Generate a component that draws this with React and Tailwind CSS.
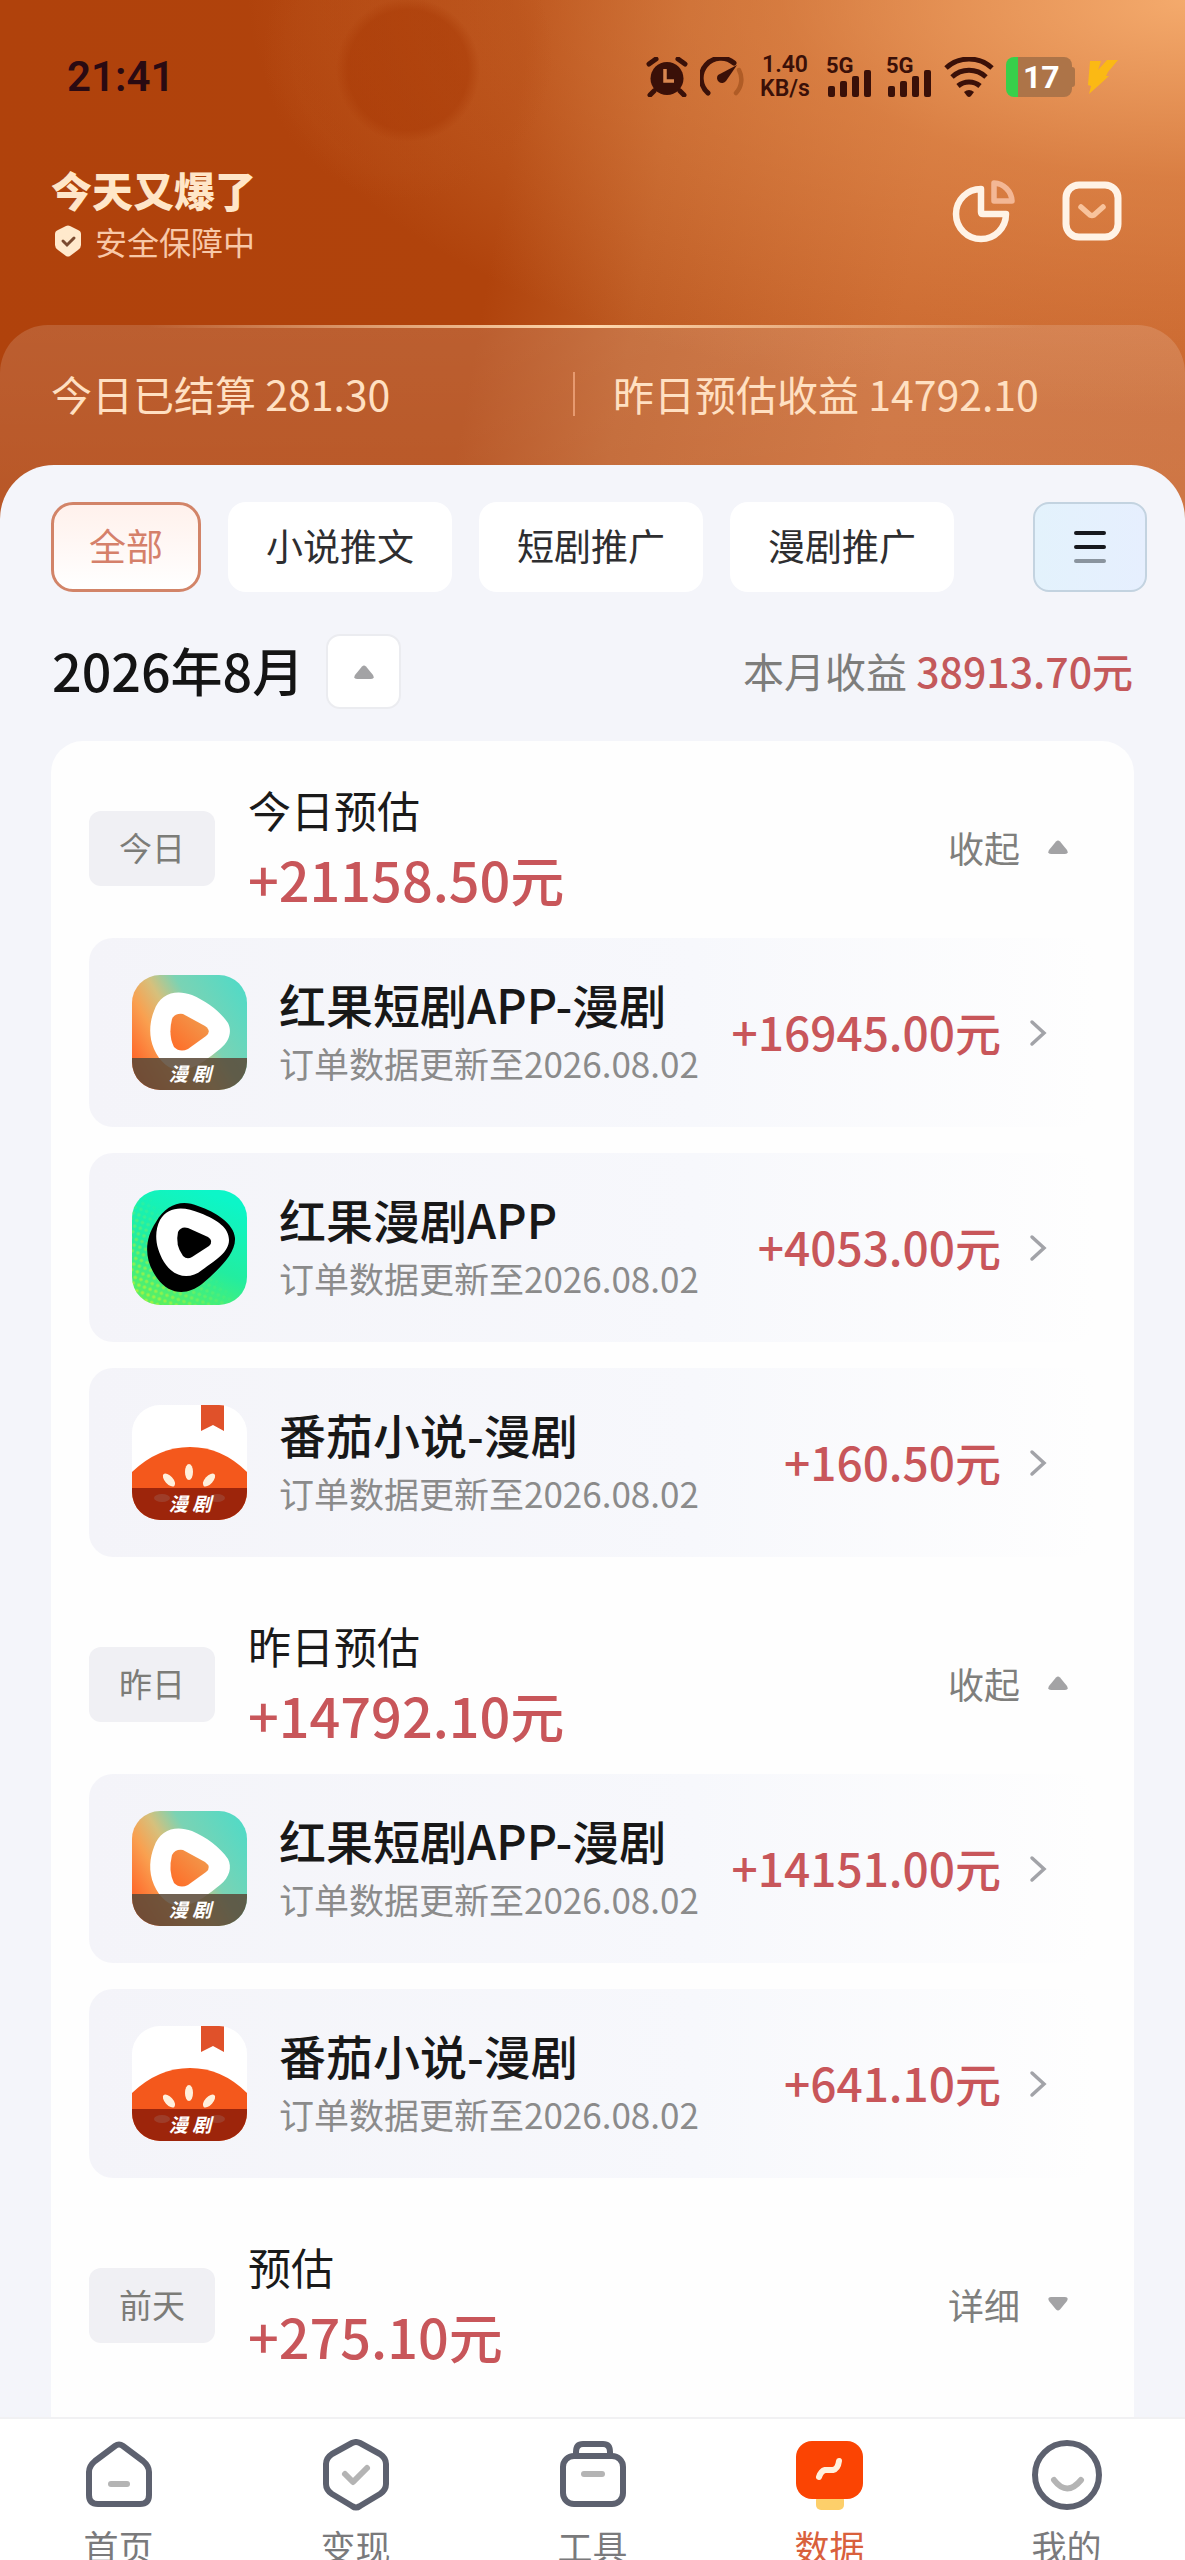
import React from 'react';

function AlarmIcon() {
  return (
    <svg viewBox="0 0 42 40" className="h-10 w-[42px]" fill="none" stroke="#3a1008" strokeLinecap="round">
      <circle cx="21" cy="21.500" r="16.500" fill="#3a1008" stroke="none" />
      <path d="M3 7l7-5M39 7l-7-5" strokeWidth="5" />
      <path d="M8 34l-4 4M34 34l4 4" strokeWidth="5" />
      <path d="M19 12v12h9" stroke="#d9864f" strokeWidth="3.500" strokeLinecap="butt" />
    </svg>
  );
}

function GaugeIcon() {
  return (
    <svg viewBox="0 0 44 40" className="h-10 w-11" fill="none" strokeLinecap="round">
      <path d="M39 13a20 20 0 0 1-3 23" stroke="#b05c26" strokeWidth="4.500" />
      <path d="M8 36A19 19 0 0 1 34 6" stroke="#3a1008" strokeWidth="5" />
      <path d="M37 8L18 18a5 5 0 1 0 8 6z" fill="#3a1008" />
    </svg>
  );
}

function SignalIcon() {
  return (
    <div className="flex h-10 w-[46px] flex-col">
      <span className="h-3 text-[22px] leading-[18px] font-bold">5G</span>
      <svg viewBox="0 0 46 28" className="h-7 w-[46px]" fill="#3a1008">
        <rect x="2" y="17" width="7" height="11" rx="2" />
        <rect x="14" y="12" width="7" height="16" rx="2" />
        <rect x="26" y="7" width="7" height="21" rx="2" />
        <rect x="38" y="1" width="7" height="27" rx="2" />
      </svg>
    </div>
  );
}

function WifiIcon() {
  return (
    <svg viewBox="0 0 50 40" className="h-10 w-[50px]" fill="none" stroke="#3a1008" strokeWidth="5">
      <path d="M2 11a34 34 0 0 1 46 0" />
      <path d="M8 20a25 25 0 0 1 34 0" />
      <path d="M14 29a17 17 0 0 1 22 0" />
      <path d="M20 35q5-4 10 0l-3 4q-2 2-4 0z" fill="#3a1008" stroke="none" />
    </svg>
  );
}

function StatusBar() {
  return (
    <div className="flex items-center justify-between pr-[66px] pl-[67px] font-['Roboto','Noto_Sans_CJK_SC',sans-serif] text-[#3a1008]">
      <time className="text-[42px] leading-12 font-semibold text-[#2a0a12]">21:41</time>
      <div className="flex items-center gap-3">
        <AlarmIcon />
        <GaugeIcon />
        <div className="ml-1 w-[50px] text-center text-[23px] leading-6 font-semibold whitespace-nowrap">
          <div>1.40</div>
          <div>KB/s</div>
        </div>
        <div className="ml-1 flex gap-[14px]">
          <SignalIcon />
          <SignalIcon />
        </div>
        <WifiIcon />
        <div className="flex items-center">
          <div className="flex h-10 w-[66px] items-center rounded-lg bg-linear-to-r from-[#37d04a] from-18% to-[#ad7448] to-18% pl-[17px]">
            <span className="text-[32px] leading-10 font-bold text-white">17</span>
          </div>
          <div className="h-5 w-[3px] rounded-r bg-[#ad7448]" />
        </div>
        <svg viewBox="0 0 32 36" className="h-9 w-8" fill="#fbb914">
          <path d="M3 2h11l-3 9L20 1h11L21 13l-2 4h3L11 27l-9 8 2-8-3-1z" />
        </svg>
      </div>
    </div>
  );
}

function ShieldIcon() {
  return (
    <svg viewBox="0 0 26 32" className="h-8 w-[26px]" fill="none">
      <path d="M11 1q2-1 4 0l8 4q3 1 3 4v11q0 3-3 5l-8 6q-2 1-4 0l-8-6q-3-2-3-5V9q0-3 3-4z" fill="#ffe9cc" />
      <path d="M8 16l4 4 7-7" stroke="#7a4a30" strokeWidth="3" strokeLinecap="round" />
    </svg>
  );
}

function PieIcon() {
  return (
    <svg viewBox="0 0 64 64" className="size-16" fill="none" strokeWidth="6.500" strokeLinejoin="round">
      <path d="M29 10v23q0 2 2 2h23a25 25 0 1 1-25-25z" stroke="#fff3e6" />
      <path d="M42 4v18h18A19 19 0 0 0 42 4z" stroke="#f3b795" strokeWidth="5.500" />
    </svg>
  );
}

function InboxIcon() {
  return (
    <svg viewBox="0 0 60 60" className="size-15" fill="none" strokeLinecap="round" strokeLinejoin="round">
      <rect x="4" y="4" width="52" height="52" rx="13" stroke="#fff3e6" strokeWidth="7" />
      <path d="M19 26l9 8q2 1 4 0l9-8" stroke="#f8c39c" strokeWidth="5.500" />
    </svg>
  );
}

function Caret({ down }) {
  return (
    <svg viewBox="0 0 20 14" className={down ? 'h-[14px] w-5 rotate-180' : 'h-[14px] w-5'} fill="#a3a3a5">
      <path d="M8 1.500q2-2 4 0l7 8.500q2 4-2 4H3q-4 0-2-4z" />
    </svg>
  );
}

function Header() {
  return (
    <header className="bg-[radial-gradient(circle_at_408px_70px,#a8380480_0,#a8380480_60px,#a8380400_72px),radial-gradient(circle_at_408px_55px,#b84f1844_0,#b84f1844_115px,#b84f1800_145px),radial-gradient(ellipse_at_100%_0%,#f4aa6c_0%,#e8955788_24%,#e8955700_56%),linear-gradient(100deg,#b0420c_0%,#b0430c_42%,#bd5a22_54%,#c9662d_75%,#c8642c_100%)] pt-[53px]">
      <StatusBar />
      <div className="mt-[62px] flex items-start justify-between pr-[63px] pl-[51px]">
        <div>
          <h1 className="text-[41px] leading-[52px] font-black text-[#ffe6c8]">今天又爆了</h1>
          <div className="flex items-center gap-[14px] pl-1 text-[32px] leading-[52px] text-[#f8c8a8]">
            <ShieldIcon />
            安全保障中
          </div>
        </div>
        <div className="flex items-center gap-[46px] pt-[16px]">
          <button type="button" aria-label="统计"><PieIcon /></button>
          <button type="button" aria-label="消息"><InboxIcon /></button>
        </div>
      </div>
      <div className="mt-[58px] rounded-t-[48px] bg-linear-to-b from-[#ffffff26] to-[#ffffff1c] pb-[60px]">
        <div className="mx-auto h-[3px] w-3/4 bg-linear-to-r from-transparent via-[#ffd9ae] to-transparent" />
        <div className="flex h-[137px] items-center pb-[6px] pl-[51px] text-[41px] leading-none text-[#ffe0c2]">
          <span className="w-[522px] whitespace-pre">今日已结算 281.30</span>
          <span className="h-11 w-[2px] bg-[#e79a70]" />
          <span className="pl-[38px] whitespace-pre">昨日预估收益 14792.10</span>
        </div>
      </div>
    </header>
  );
}

function Ribbon({ color }) {
  return (
    <>
      <rect y="83" width="115" height="32" fill={color} />
      <text x="58" y="106" textAnchor="middle" fontSize="19" fontWeight="700" fontStyle="italic" fill="#fff" className="font-['Noto_Sans_CJK_SC',sans-serif]">漫 剧</text>
    </>
  );
}

function DramaIcon() {
  return (
    <svg viewBox="0 0 115 115" className="size-[115px] rounded-[28px]">
      <defs>
        <linearGradient id="dramaBg" x1="0" y1="0.750" x2="1" y2="0.150">
          <stop offset="0" stopColor="#ff6428" />
          <stop offset="0.250" stopColor="#f9a050" />
          <stop offset="0.420" stopColor="#d6c07c" />
          <stop offset="0.600" stopColor="#7ad3b4" />
          <stop offset="1" stopColor="#52dac6" />
        </linearGradient>
        <linearGradient id="dramaPlay" x1="0" y1="1" x2="1" y2="0">
          <stop offset="0" stopColor="#ff6a26" />
          <stop offset="1" stopColor="#efa052" />
        </linearGradient>
      </defs>
      <rect width="115" height="115" fill="url(#dramaBg)" />
      <path d="M22 36C28 18 44 14 60 20C74 26 88 36 96 48C100 56 98 66 88 74C78 82 66 92 52 95C40 97 28 88 22 74C16 60 18 46 22 36z" fill="#fff" />
      <path d="M40 44q3-6 11-5l22 12q7 5 1 10L56 74q-8 4-14-2-6-12-2-28z" fill="url(#dramaPlay)" />
      <Ribbon color="#5b4a38dd" />
    </svg>
  );
}

function ComicIcon() {
  return (
    <svg viewBox="0 0 115 115" className="size-[115px] rounded-[28px]">
      <defs>
        <linearGradient id="comicBg" x1="0.200" y1="1" x2="0.600" y2="0">
          <stop offset="0" stopColor="#5cf060" />
          <stop offset="0.450" stopColor="#22eda0" />
          <stop offset="1" stopColor="#0cf6c8" />
        </linearGradient>
        <linearGradient id="dotFade" x1="0" y1="1" x2="0.700" y2="0.400">
          <stop offset="0" stopColor="#fff" />
          <stop offset="0.800" stopColor="#000" />
        </linearGradient>
        <pattern id="dots" width="6" height="6" patternUnits="userSpaceOnUse" patternTransform="rotate(20)">
          <circle cx="3" cy="3" r="1.800" fill="#b4f23c" />
        </pattern>
        <mask id="dotMask"><rect width="115" height="115" fill="url(#dotFade)" /></mask>
      </defs>
      <rect width="115" height="115" fill="url(#comicBg)" />
      <rect width="115" height="115" fill="url(#dots)" mask="url(#dotMask)" />
      <path d="M24 32C34 14 50 9 66 16C84 22 102 34 103 48C104 64 86 80 70 94C56 105 38 106 25 88C12 70 12 50 24 32z" fill="#000" />
      <path d="M28 30C36 16 52 16 68 23C86 30 97 38 97 50C97 62 84 70 70 80C58 90 42 88 32 72C23 57 22 42 28 30z" fill="#fff" />
      <path d="M46 42q3-6 10-4l20 9q6 4 1 9L60 67q-5 3-9-1-8-11-5-24z" fill="#000" />
    </svg>
  );
}

function TomatoIcon() {
  return (
    <svg viewBox="0 0 115 115" className="size-[115px] rounded-[28px]">
      <rect width="115" height="115" fill="#fff" />
      <path d="M69 0h23v26l-11-6-12 6z" fill="#e0512a" />
      <path d="M0 67Q26 42 58 42Q90 42 115 67V115H0z" fill="#f4581c" />
      <g fill="#fff0dc">
        <ellipse cx="57" cy="67" rx="4" ry="8" />
        <ellipse cx="37" cy="75" rx="4" ry="8" transform="rotate(-42 37 75)" />
        <ellipse cx="77" cy="75" rx="4" ry="8" transform="rotate(42 77 75)" />
        <ellipse cx="30" cy="93" rx="8" ry="4" />
        <ellipse cx="85" cy="93" rx="8" ry="4" />
      </g>
      <Ribbon color="#8c1c08d8" />
    </svg>
  );
}

const TABS = ['全部', '小说推文', '短剧推广', '漫剧推广'];

const ICONS = { drama: DramaIcon, comic: ComicIcon, tomato: TomatoIcon };

const SECTIONS = [
  {
    tag: '今日', title: '今日预估', total: '+21158.50元', open: true,
    rows: [
      { icon: 'drama', name: '红果短剧APP-漫剧', amount: '+16945.00元' },
      { icon: 'comic', name: '红果漫剧APP', amount: '+4053.00元' },
      { icon: 'tomato', name: '番茄小说-漫剧', amount: '+160.50元' },
    ],
  },
  {
    tag: '昨日', title: '昨日预估', total: '+14792.10元', open: true,
    rows: [
      { icon: 'drama', name: '红果短剧APP-漫剧', amount: '+14151.00元' },
      { icon: 'tomato', name: '番茄小说-漫剧', amount: '+641.10元' },
    ],
  },
  { tag: '前天', title: '预估', total: '+275.10元', open: false, rows: [] },
];

function Filters() {
  return (
    <div className="flex items-center justify-between pr-[38px] pl-[51px]">
      <div className="flex gap-[27px]">
        {TABS.map((tab, i) => (
          <button
            key={tab}
            type="button"
            className={
              i === 0
                ? 'h-[90px] rounded-[22px] border-3 border-[#d28468] bg-linear-to-b from-[#fff1ec] to-white px-[35px] pb-[3px] text-[37px] leading-none text-[#d5806a]'
                : 'h-[90px] rounded-[18px] bg-white px-[38px] pb-[3px] text-[37px] leading-none text-[#2e2e30]'
            }
          >
            {tab}
          </button>
        ))}
      </div>
      <button type="button" aria-label="菜单" className="flex h-[90px] w-[114px] items-center justify-center rounded-[16px] border-2 border-[#c3d3e0] bg-linear-to-r from-[#e3f2fc] to-[#e6effe]">
        <svg viewBox="0 0 32 36" className="h-9 w-8" strokeWidth="4" strokeLinecap="round">
          <path d="M2 4h28M2 18h28" stroke="#16181d" />
          <path d="M2 32h28" stroke="#8a949e" />
        </svg>
      </button>
    </div>
  );
}

function MonthBar() {
  return (
    <div className="mt-[42px] flex items-center justify-between px-[52px]">
      <div className="flex items-center gap-[22px]">
        <h2 className="pb-[3px] text-[52px] leading-[72px] font-medium text-[#141414]">2026年8月</h2>
        <button type="button" aria-label="选择月份" className="flex size-[75px] items-center justify-center rounded-[14px] border-2 border-[#ebecf0] bg-white">
          <Caret />
        </button>
      </div>
      <p className="pb-[3px] text-[41px] leading-none whitespace-pre text-[#7d7d7b]">
        本月收益 <span className="font-medium text-[#c4595b]">38913.70元</span>
      </p>
    </div>
  );
}

function Row({ icon, name, amount }) {
  const Icon = ICONS[icon];
  return (
    <li>
      <a href="#detail" className="flex h-[189px] items-center rounded-[24px] bg-linear-to-r from-[#f4f4f9] via-[#f7f8fc] via-60% to-[#fefefe] pr-[49px] pl-[43px]">
        <Icon />
        <div className="ml-[32px] flex-1 pb-[6px]">
          <div className="text-[47px] leading-[66px] font-medium text-[#181818]">{name}</div>
          <div className="text-[35px] leading-[52px] text-[#8b8b8b]">订单数据更新至2026.08.02</div>
        </div>
        <span className="pb-[3px] text-[46px] leading-none font-medium text-[#c8565a]">{amount}</span>
        <svg viewBox="0 0 18 28" className="ml-[28px] h-7 w-[18px]" fill="none" stroke="#a2a3a8" strokeWidth="3.500" strokeLinecap="round">
          <path d="M3 3l12 11L3 25" />
        </svg>
      </a>
    </li>
  );
}

function Section({ tag, title, total, open, rows }) {
  return (
    <section>
      <div className="flex h-[150px] items-center pr-[28px]">
        <span className="flex h-[75px] w-[126px] items-center justify-center rounded-[12px] bg-[#f0f0f4] pb-[2px] text-[33px] leading-none text-[#7c7c78]">{tag}</span>
        <div className="ml-[33px] flex-1 pb-[5px]">
          <h3 className="text-[43px] leading-[66px] text-[#1a1a1a]">{title}</h3>
          <p className="text-[54px] leading-[74px] font-medium text-[#c8565a]">{total}</p>
        </div>
        <button type="button" className="flex items-center gap-[28px] pb-[2px] text-[36px] leading-none text-[#7f7f7d]">
          {open ? '收起' : '详细'}
          <Caret down={!open} />
        </button>
      </div>
      {rows.length > 0 && (
        <ul className="mt-[15px] flex flex-col gap-[26px]">
          {rows.map((row) => (
            <Row key={row.name} {...row} />
          ))}
        </ul>
      )}
    </section>
  );
}

function NavGlyph({ name }) {
  const common = { viewBox: '0 0 72 72', className: 'size-[72px]', fill: 'none', strokeLinecap: 'round', strokeLinejoin: 'round' };
  if (name === 'home')
    return (
      <svg {...common}>
        <path d="M32 7q4-3 8 0l20 15q6 5 6 11v23q0 9-9 9H15q-9 0-9-9V33q0-6 6-11z" stroke="#5d616f" strokeWidth="6" />
        <path d="M28 45h16" stroke="#b4b4b4" strokeWidth="6" />
      </svg>
    );
  if (name === 'earn')
    return (
      <svg {...common}>
        <path d="M32 4q4-2 8 0l20 11q6 4 6 10v20q0 6-6 10L40 67q-4 3-8 0L12 55q-6-4-6-10V25q0-6 6-10z" stroke="#5d616f" strokeWidth="6" />
        <path d="M25 35l8 8 14-14" stroke="#b4b4b4" strokeWidth="6" />
      </svg>
    );
  if (name === 'tools')
    return (
      <svg {...common}>
        <path d="M19 17v-4q0-8 7-8h20q7 0 7 8v4" stroke="#5d616f" strokeWidth="6" />
        <rect x="6" y="17" width="60" height="48" rx="11" stroke="#5d616f" strokeWidth="6" />
        <path d="M27 35h18" stroke="#b4b4b4" strokeWidth="6" />
      </svg>
    );
  if (name === 'data')
    return (
      <svg {...common}>
        <rect x="22" y="56" width="28" height="15" rx="5" fill="#fdcf6a" />
        <rect x="2" y="2" width="67" height="58" rx="16" fill="#fb4403" />
        <path d="M25 38q2-6 6-7h8q5-1 6-9" stroke="#fff0dc" strokeWidth="6" />
      </svg>
    );
  return (
    <svg {...common}>
      <circle cx="36" cy="36" r="32" stroke="#5d616f" strokeWidth="6" />
      <path d="M23 41q13 17 27 0" stroke="#b4b4b4" strokeWidth="6" />
    </svg>
  );
}

const NAV = [
  ['home', '首页'],
  ['earn', '变现'],
  ['tools', '工具'],
  ['data', '数据'],
  ['me', '我的'],
];

function BottomNav() {
  return (
    <nav className="grid h-[143px] shrink-0 grid-cols-5 overflow-hidden border-t-2 border-[#f1f1f3] bg-white">
      {NAV.map(([name, label]) => (
        <a key={name} href={`#${name}`} className={name === 'data' ? 'flex flex-col items-center pt-[20px] text-[#d9603c]' : 'flex flex-col items-center pt-[20px] text-[#7a7a7c]'}>
          <NavGlyph name={name} />
          <span className="mt-2 text-[35px] leading-[54px]">{label}</span>
        </a>
      ))}
    </nav>
  );
}

export default function App() {
  return (
    <div className="flex h-screen flex-col overflow-hidden bg-[#f4f5fa] font-['Noto_Sans_CJK_SC',sans-serif]">
      <Header />
      <main className="-mt-[60px] min-h-0 flex-1 overflow-hidden rounded-t-[54px] bg-[#f4f5fa] pt-[37px]">
        <Filters />
        <MonthBar />
        <div className="mx-[51px] mt-[32px] flex flex-col gap-[52px] rounded-[32px] bg-[#fefefe] px-[38px] pt-[32px] pb-24">
          {SECTIONS.map((s) => (
            <Section key={s.tag} {...s} />
          ))}
        </div>
      </main>
      <BottomNav />
    </div>
  );
}
